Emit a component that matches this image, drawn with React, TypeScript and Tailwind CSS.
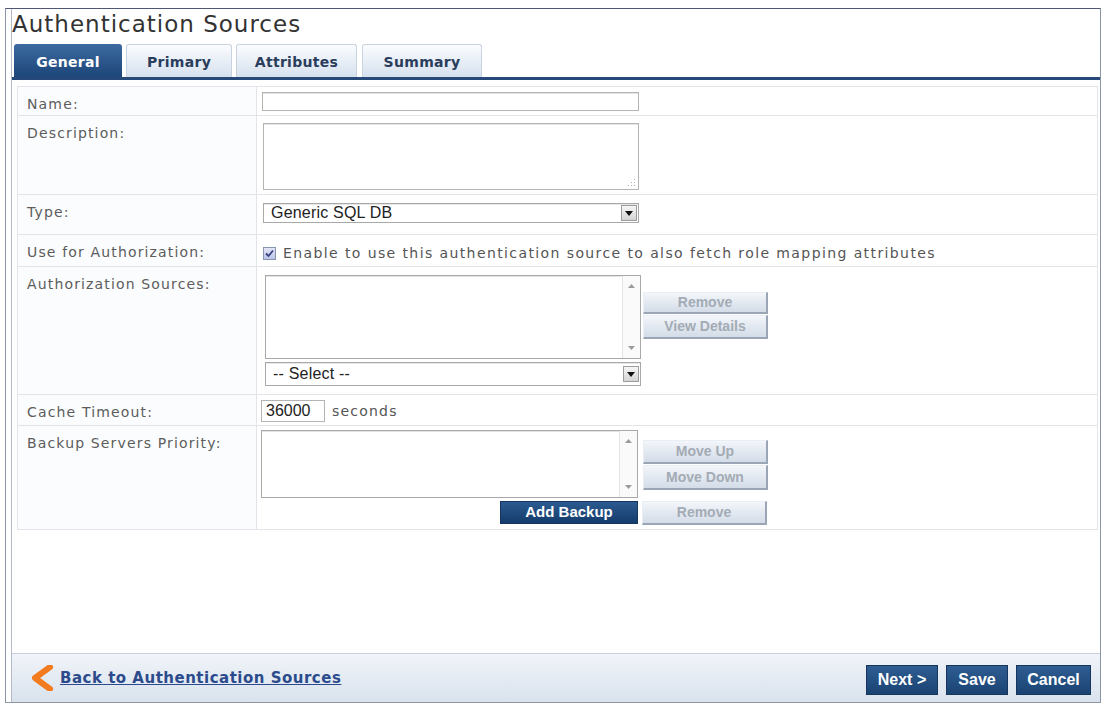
import React from "react";

const V = "font-['DejaVu_Sans',Verdana,sans-serif]";
const A = "font-['Liberation_Sans',Arial,sans-serif]";

function DropArrow() {
  return (
    <span className="flex h-[16px] w-[16px] items-center justify-center border border-[#9c9c9c] bg-gradient-to-b from-[#f6f6f6] to-[#d4d4d4]">
      <svg width="8" height="5" viewBox="0 0 8 5">
        <path d="M0 0h8L4 5z" fill="#111" />
      </svg>
    </span>
  );
}

function Select({ text, h }: { text: string; h: string }) {
  return (
    <div className={`flex w-[376px] ${h} items-center justify-between border border-[#a9a9a9] bg-white pl-[7px] pr-[1px] shadow-[inset_0_1px_0_#e6e6e6]`}>
      <span className={`${A} text-[16px] tracking-[0.2px] text-[#222]`}>{text}</span>
      <DropArrow />
    </div>
  );
}

function ListBox({ w, h }: { w: string; h: string }) {
  return (
    <div className={`flex ${w} ${h} border border-[#a9a9a9] bg-white shadow-[inset_0_1px_0_#e3e3e3]`}>
      <div className="flex-1" />
      <div className="flex w-[18px] flex-col items-center justify-between border-l border-[#e4e4e4] bg-[#fafafa] py-[8px]">
        <svg width="7" height="4" viewBox="0 0 7 4">
          <path d="M0 4L3.5 0L7 4z" fill="#9a9a9a" />
        </svg>
        <svg width="7" height="4" viewBox="0 0 7 4">
          <path d="M0 0h7L3.5 4z" fill="#9a9a9a" />
        </svg>
      </div>
    </div>
  );
}

function GrayBtn({ label, h }: { label: string; h: string }) {
  return (
    <div
      className={`flex w-[125px] ${h} items-center justify-center border-l border-t border-[#e9eef4] border-r-2 border-b-2 border-r-[#9aa6b5] border-b-[#9aa6b5] bg-gradient-to-b from-[#f3f6fa] to-[#d3dce8] ${A} text-[14px] font-bold text-[#a3abb5]`}
    >
      {label}
    </div>
  );
}

function Row({
  label,
  h,
  children,
  last,
}: {
  label: string;
  h: string;
  children?: React.ReactNode;
  last?: boolean;
}) {
  return (
    <div className={`flex ${h} ${last ? "" : "border-b"} border-[#e1e5ea]`}>
      <div className={`w-[239px] shrink-0 border-r border-[#e1e5ea] bg-[#fbfcfd] pl-[9px] pt-[7px] ${V} text-[14px] leading-[20px] tracking-[1.15px] text-[#5c5c5c]`}>
        {label}
      </div>
      <div className="flex-1">{children}</div>
    </div>
  );
}

function Tab({ label, active, w, ml }: { label: string; active?: boolean; w: string; ml: string }) {
  return (
    <div
      className={`${w} ${ml} flex h-[33px] items-center justify-center rounded-t-[3px] pt-[3px] ${V} text-[14px] font-bold tracking-[0.3px] ${
        active
          ? "bg-gradient-to-b from-[#3c6aa0] to-[#1d4679] text-white"
          : "border border-b-0 border-[#c9d3df] bg-gradient-to-b from-[#fbfcfe] to-[#d6e1ee] text-[#2a3d5c]"
      }`}
    >
      {label}
    </div>
  );
}

function BlueBtn({ label, w }: { label: string; w: string }) {
  return (
    <div
      className={`flex ${w} h-[30px] items-center justify-center border border-[#17365e] bg-gradient-to-b from-[#2f5d92] to-[#1a4373] ${A} text-[16px] font-bold text-white`}
    >
      {label}
    </div>
  );
}

export default function App() {
  return (
    <div className="h-[706px] w-[1103px] bg-white pb-[3px] pl-[5px] pr-[2px] pt-[8px]">
      <div className="flex h-full flex-col border border-[#8d95a5] border-t-[#4f5773]">
        <div className="ml-[5px] flex flex-1 flex-col border-l border-[#b3bac6]">
          {/* title */}
          <div className={`h-[35px] ${V} text-[23px] leading-[30px] tracking-[1px] text-[#333]`}>
            Authentication Sources
          </div>
          {/* tabs */}
          <div className="flex h-[36px] items-end border-b-[3px] border-[#26497a] pl-[2px]">
            <Tab label="General" active w="w-[108px]" ml="ml-0" />
            <Tab label="Primary" w="w-[106px]" ml="ml-[4px]" />
            <Tab label="Attributes" w="w-[121px]" ml="ml-[4px]" />
            <Tab label="Summary" w="w-[120px]" ml="ml-[5px]" />
          </div>
          {/* content */}
          <div className="flex-1 pl-[5px] pr-[2px] pt-[6px]">
            <div className="border border-[#e1e5ea]">
              <Row label="Name:" h="h-[29px]">
                <div className="pl-[5px] pt-[5px]">
                  <div className="h-[19px] w-[377px] border border-[#b4b4b4] bg-white shadow-[inset_0_1px_0_#e6e6e6]" />
                </div>
              </Row>
              <Row label="Description:" h="h-[79px]">
                <div className="pl-[6px] pt-[7px]">
                  <div className="relative h-[67px] w-[376px] border border-[#b4b4b4] bg-white shadow-[inset_0_1px_0_#e6e6e6]">
                    <svg className="absolute bottom-[2px] right-[2px]" width="9" height="9" viewBox="0 0 9 9">
                      <g fill="#b0b0b0">
                        <rect x="7" y="1" width="1" height="1" />
                        <rect x="7" y="4" width="1" height="1" />
                        <rect x="4" y="4" width="1" height="1" />
                        <rect x="7" y="7" width="1" height="1" />
                        <rect x="4" y="7" width="1" height="1" />
                        <rect x="1" y="7" width="1" height="1" />
                      </g>
                    </svg>
                  </div>
                </div>
              </Row>
              <Row label="Type:" h="h-[40px]">
                <div className="pl-[6px] pt-[8px]">
                  <Select text="Generic SQL DB" h="h-[20px]" />
                </div>
              </Row>
              <Row label="Use for Authorization:" h="h-[32px]">
                <div className="flex items-center pl-[6px] pt-[8px]">
                  <span className="flex h-[13px] w-[13px] items-center justify-center border border-[#8796ae] bg-gradient-to-b from-[#e3e6f7] to-[#bcc4e8]">
                    <svg width="9" height="9" viewBox="0 0 9 9">
                      <path d="M1 4.5L3.5 7L8 1.5" fill="none" stroke="#3a4380" strokeWidth="1.8" />
                    </svg>
                  </span>
                  <span className={`ml-[7px] ${V} text-[14px] leading-[20px] tracking-[1.4px] text-[#555]`}>
                    Enable to use this authentication source to also fetch role mapping attributes
                  </span>
                </div>
              </Row>
              <Row label="Authorization Sources:" h="h-[128px]">
                <div className="flex pl-[8px] pt-[8px]">
                  <div className="flex flex-col gap-[3px]">
                    <ListBox w="w-[376px]" h="h-[84px]" />
                    <Select text="-- Select --" h="h-[24px]" />
                  </div>
                  <div className="ml-[2px] flex flex-col gap-[1px] pt-[17px]">
                    <GrayBtn label="Remove" h="h-[22px]" />
                    <GrayBtn label="View Details" h="h-[24px]" />
                  </div>
                </div>
              </Row>
              <Row label="Cache Timeout:" h="h-[31px]">
                <div className="flex items-center pl-[4px] pt-[5px]">
                  <div className={`flex h-[22px] w-[64px] items-center border border-[#b4b4b4] pl-[4px] ${A} text-[16px] text-[#222]`}>
                    36000
                  </div>
                  <span className={`ml-[7px] ${V} text-[14px] tracking-[1.2px] text-[#555]`}>seconds</span>
                </div>
              </Row>
              <Row label="Backup Servers Priority:" h="h-[103px]" last>
                <div className="pl-[4px] pt-[4px]">
                  <div className="flex">
                    <ListBox w="w-[377px]" h="h-[68px]" />
                    <div className="ml-[5px] flex flex-col gap-[1px] pt-[10px]">
                      <GrayBtn label="Move Up" h="h-[24px]" />
                      <GrayBtn label="Move Down" h="h-[25px]" />
                    </div>
                  </div>
                  <div className="mt-[3px] flex">
                    <div className="flex w-[377px] justify-end">
                      <div className={`flex h-[23px] w-[138px] items-center justify-center border border-[#17365e] bg-gradient-to-b from-[#2c5a90] to-[#143c6c] ${A} text-[15px] font-bold text-white`}>
                        Add Backup
                      </div>
                    </div>
                    <div className="ml-[4px]">
                      <GrayBtn label="Remove" h="h-[24px]" />
                    </div>
                  </div>
                </div>
              </Row>
            </div>
          </div>
          {/* footer */}
          <div className="flex h-[49px] items-center justify-between border-t border-[#c7d0db] bg-gradient-to-b from-[#f1f4f9] to-[#d9e2ed] pl-[18px] pr-[9px]">
            <div className="flex items-center">
              <svg width="24" height="26" viewBox="0 0 24 26">
                <path d="M20 2L5 13L20 24" fill="none" stroke="#f27b1f" strokeWidth="6" strokeLinejoin="round" strokeLinecap="round" />
              </svg>
              <span className={`ml-[6px] ${V} text-[15px] font-bold tracking-[0.5px] text-[#2c4b8c] underline`}>
                Back to Authentication Sources
              </span>
            </div>
            <div className="flex gap-[8px] pt-[4px]">
              <BlueBtn label="Next >" w="w-[72px]" />
              <BlueBtn label="Save" w="w-[62px]" />
              <BlueBtn label="Cancel" w="w-[75px]" />
            </div>
          </div>
        </div>
      </div>
    </div>
  );
}
